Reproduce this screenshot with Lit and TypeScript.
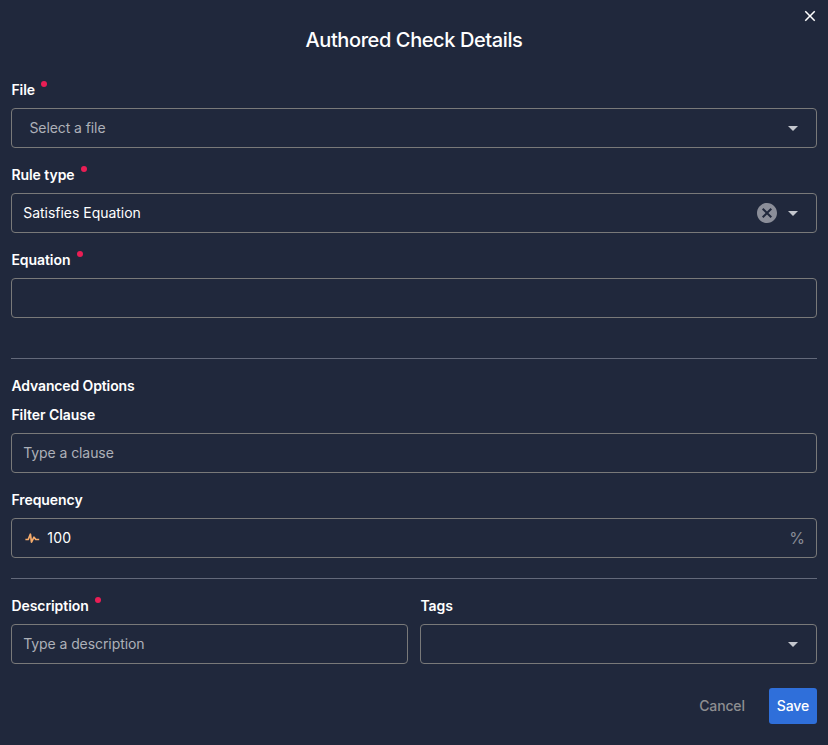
import { LitElement, html, css, svg, nothing } from "lit";
import { customElement, property } from "lit/decorators.js";

const CARET = "M7,10L12,15L17,10H7Z";
const CLOSE =
  "M19,6.41L17.59,5L12,10.59L6.41,5L5,6.41L10.59,12L5,17.59L6.41,19L12,13.41L17.59,19L19,17.59L13.41,12L19,6.41Z";
const CLEAR =
  "M12,2C17.53,2 22,6.47 22,12C22,17.53 17.53,22 12,22C6.47,22 2,17.53 2,12C2,6.47 6.47,2 12,2M15.59,7L12,10.59L8.41,7L7,8.41L10.59,12L7,15.59L8.41,17L12,13.41L15.59,17L17,15.59L13.41,12L17,8.41L15.59,7Z";

const icon = (d: string, size: number, cls: string) => html`
  <svg class=${cls} width=${size} height=${size} viewBox="0 0 24 24" aria-hidden="true">
    ${svg`<path d=${d} fill="currentColor" />`}
  </svg>`;

@customElement("form-field")
class FormField extends LitElement {
  @property() label = "";
  @property() value = "";
  @property() placeholder = "";
  @property() kind = "plain";
  @property({ type: Boolean }) required = false;
  @property({ type: Boolean }) clearable = false;

  static styles = css`
    :host {
      display: block;
      min-width: 0;
    }
    .label {
      display: flex;
      height: 28px;
      padding-left: 0.4px;
      line-height: 20px;
      font-weight: 600;
      letter-spacing: -0.06px;
      color: #fff;
    }
    .dot {
      width: 6px;
      height: 6px;
      margin: 1px 0 0 6.3px;
      border-radius: 50%;
      background: #e91e55;
    }
    .box {
      display: flex;
      align-items: center;
      box-sizing: border-box;
      height: 40px;
      padding: 0 11px;
      border: 1px solid #797979;
      border-radius: 4px;
    }
    .text {
      flex: 1;
      padding-left: 0.2px;
      line-height: 20px;
      letter-spacing: -0.02px;
      color: #fff;
    }
    .percent .text {
      letter-spacing: 0.25px;
    }
    .hint {
      letter-spacing: -0.08px;
      color: #adb0b8;
    }
    .select .hint {
      padding-left: 6.4px;
    }
    .arrow {
      color: #c4c7ce;
    }
    .clear {
      margin-right: 2px;
      color: #8b8e99;
    }
    .pulse {
      margin: 0 7px 0 1px;
    }
    .unit {
      font-size: 16px;
      color: #888c96;
    }
  `;

  render() {
    const select = this.kind === "select";
    const percent = this.kind === "percent";
    return html`
      <div class="label">
        ${this.label}${this.required ? html`<span class="dot"></span>` : nothing}
      </div>
      <div class="box ${this.kind}">
        ${percent
          ? html`<svg class="pulse" width="16" height="14" viewBox="0 0 16 14" aria-hidden="true">
              <path
                d="M1.4 8.5H4.2L6.4 3.2L7.5 11.2L10 6.2L11.8 8.5H15.2"
                fill="none"
                stroke="#f5ab6b"
                stroke-width="1.7"
                stroke-linejoin="round"
              />
            </svg>`
          : nothing}
        <span class="text ${this.value ? "" : "hint"}">${this.value || this.placeholder}</span>
        ${this.clearable ? icon(CLEAR, 24, "clear") : nothing}
        ${select ? icon(CARET, 24, "arrow") : nothing}
        ${percent ? html`<span class="unit">%</span>` : nothing}
      </div>
    `;
  }
}

@customElement("app-root")
class AppRoot extends LitElement {
  static styles = css`
    :host {
      display: block;
      position: relative;
      box-sizing: border-box;
      height: 745px;
      padding: 26px 11px 0;
      background: #20283c;
      color: #fff;
      font: 400 14px/20px Inter, sans-serif;
    }
    .close {
      position: absolute;
      top: 6.5px;
      right: 9.5px;
      color: #fff;
    }
    h1 {
      margin: 0 0 26px;
      text-align: center;
      font-size: 20px;
      line-height: 28px;
      font-weight: 500;
      letter-spacing: -0.4px;
    }
    .stack {
      display: grid;
      gap: 17px;
    }
    .rule {
      height: 1px;
      background: #63697a;
    }
    .first {
      margin: 40px 0 17px;
    }
    .second {
      margin: 20px 0 17px;
    }
    h2 {
      margin: 0 0 9px;
      padding-left: 0.4px;
      font-size: 14px;
      line-height: 20px;
      font-weight: 600;
      letter-spacing: -0.12px;
    }
    .pair {
      display: grid;
      grid-template-columns: 1fr 1fr;
      gap: 12px;
    }
    .actions {
      display: flex;
      justify-content: flex-end;
      gap: 16px;
      margin-top: 24px;
    }
    .btn {
      height: 36px;
      padding: 0 8px;
      border-radius: 3px;
      line-height: 36px;
      font-weight: 500;
      letter-spacing: -0.15px;
    }
    .cancel {
      color: #8d8e91;
    }
    .save {
      background: #2f6fda;
    }
  `;

  render() {
    return html`
      ${icon(CLOSE, 18, "close")}
      <h1>Authored Check Details</h1>
      <div class="stack">
        <form-field label="File" kind="select" placeholder="Select a file" required></form-field>
        <form-field label="Rule type" kind="select" value="Satisfies Equation" required clearable></form-field>
        <form-field label="Equation" required></form-field>
      </div>
      <div class="rule first"></div>
      <h2>Advanced Options</h2>
      <div class="stack">
        <form-field label="Filter Clause" placeholder="Type a clause"></form-field>
        <form-field label="Frequency" kind="percent" value="100"></form-field>
      </div>
      <div class="rule second"></div>
      <div class="pair">
        <form-field label="Description" placeholder="Type a description" required></form-field>
        <form-field label="Tags" kind="select"></form-field>
      </div>
      <div class="actions">
        <span class="btn cancel">Cancel</span>
        <span class="btn save">Save</span>
      </div>
    `;
  }
}
